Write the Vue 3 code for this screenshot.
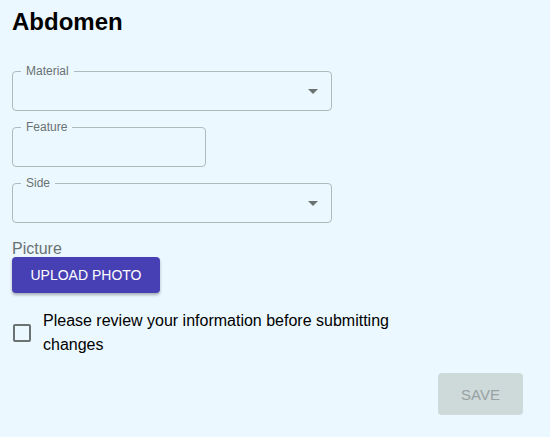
<script setup>
import { ref } from 'vue'

const material = ref('')
const feature = ref('')
const side = ref('')
const reviewed = ref(false)
</script>

<template>
  <form class="form" @submit.prevent>
    <h1 class="title">Abdomen</h1>

    <div class="fields">
      <fieldset class="field">
        <legend class="legend"><label for="material">Material</label></legend>
        <div class="control">
          <select id="material" v-model="material" class="input"></select>
          <svg class="arrow" viewBox="0 0 24 24" aria-hidden="true"><path d="M7 10l5 5 5-5z" /></svg>
        </div>
      </fieldset>

      <fieldset class="field field-short">
        <legend class="legend"><label for="feature">Feature</label></legend>
        <div class="control">
          <input id="feature" v-model="feature" class="input" type="text" />
        </div>
      </fieldset>

      <fieldset class="field">
        <legend class="legend"><label for="side">Side</label></legend>
        <div class="control">
          <select id="side" v-model="side" class="input"></select>
          <svg class="arrow" viewBox="0 0 24 24" aria-hidden="true"><path d="M7 10l5 5 5-5z" /></svg>
        </div>
      </fieldset>
    </div>

    <div class="picture">
      <span class="caption">Picture</span>
      <button class="button upload" type="button">UPLOAD PHOTO</button>
    </div>

    <div class="review">
      <input id="reviewed" v-model="reviewed" class="checkbox" type="checkbox" />
      <label for="reviewed">Please review your information before submitting changes</label>
    </div>

    <div class="actions">
      <button class="button save" type="submit" disabled>SAVE</button>
    </div>
  </form>
</template>

<style>
body {
  background: #ecf8ff;
}
</style>

<style scoped>
.form {
  display: flex;
  flex-direction: column;
  padding: 8px 27px 22px 12px;
  color: #000;
  font-family: "Liberation Sans", Arial, sans-serif;
  font-size: 16px;
}

.title {
  margin: 0 0 30px;
  font-size: 24px;
  line-height: 28px;
}

.fields {
  display: flex;
  flex-direction: column;
  gap: 11px;
}

.field {
  box-sizing: border-box;
  width: 100%;
  max-width: 320px;
  min-width: 0;
  margin: 0;
  padding: 0 8px;
  border: 1px solid #b0babd;
  border-radius: 4px;
}

.field-short {
  max-width: 194px;
}

.legend {
  padding: 0 5px;
  color: #6a7272;
  font-size: 12px;
  line-height: 11px;
}

.control {
  display: grid;
  align-items: center;
}

.input {
  grid-area: 1 / 1;
  box-sizing: border-box;
  width: 100%;
  height: 33px;
  padding: 0 5px;
  border: 0;
  outline: 0;
  background: transparent;
  color: inherit;
  font: inherit;
  appearance: none;
}

.arrow {
  grid-area: 1 / 1;
  justify-self: end;
  width: 24px;
  height: 24px;
  margin: 0 -2px 6px 0;
  fill: #6a7272;
  pointer-events: none;
}

.picture {
  display: flex;
  flex-direction: column;
  align-items: flex-start;
  margin-top: 17px;
}

.caption {
  color: #6a7272;
  line-height: 17px;
}

.button {
  border: 0;
  border-radius: 4px;
  font-family: inherit;
}

.upload {
  min-width: 148px;
  height: 36px;
  padding: 0 16px;
  background: #4740b5;
  box-shadow: 0 2px 3px rgba(0, 0, 0, 0.3);
  color: #fff;
  font-size: 14px;
}

.review {
  display: flex;
  align-items: center;
  gap: 12px;
  max-width: 400px;
  margin-top: 16px;
  line-height: 24px;
}

.checkbox {
  flex: none;
  box-sizing: border-box;
  width: 18px;
  height: 18px;
  margin: 0 0 0 1px;
  border: 2px solid #6a7272;
  border-radius: 2px;
  appearance: none;
}

.checkbox:checked {
  background: #4740b5;
}

.actions {
  display: flex;
  justify-content: flex-end;
  margin-top: 16px;
}

.save {
  min-width: 85px;
  height: 42px;
  padding: 0 22px;
  background: #ced9da;
  color: #98a2a3;
  font-size: 15px;
}
</style>
